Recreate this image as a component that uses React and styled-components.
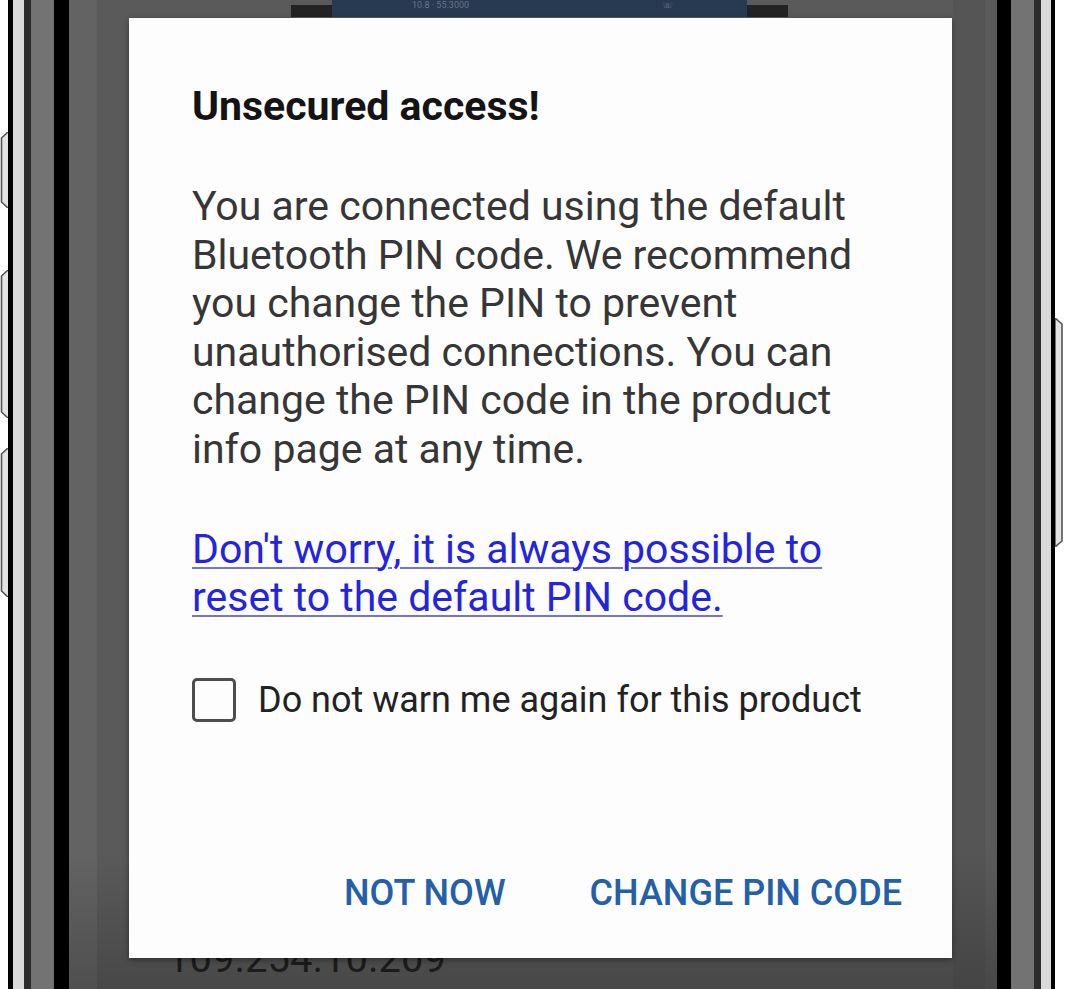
import React, { useState } from "react";
import styled, { createGlobalStyle } from "styled-components";

const GlobalStyle = createGlobalStyle`
  html, body {
    margin: 0;
    padding: 0;
    background: #ffffff;
  }
  body {
    font-family: Roboto, "Liberation Sans", Arial, sans-serif;
  }
`;

const Page = styled.div`
  position: relative;
  display: flex;
  width: 1065px;
  height: 989px;
  overflow: hidden;
  padding: 0 10px 0 8px;
  box-sizing: border-box;
  background: #ffffff;
`;

// one ring of the phone casing, only the sides are on screen
const Ring = styled.div`
  flex: 1;
  display: flex;
  height: 100%;
  box-sizing: border-box;
  padding: 0 ${(p) => p.$r}px 0 ${(p) => p.$l}px;
  background: ${(p) => p.$c};
`;

const Screen = styled.div`
  position: relative;
  flex: 1;
  display: flex;
  flex-direction: column;
  background:
    linear-gradient(to bottom, rgba(0, 0, 0, 0) 86%, rgba(0, 0, 0, 0.2) 100%),
    linear-gradient(
      to right,
      #636363 0,
      #636363 28px,
      #5a5a5a 28px,
      #5a5a5a 884px,
      #555555 884px,
      #555555 916px,
      #5a5a5a 916px
    );
`;

const TopBar = styled.div`
  display: flex;
  padding-left: 222px;
  height: 17px;
`;

const BarEnd = styled.div`
  width: 41px;
  margin-top: 5px;
  background: #232323;
`;

const BarMid = styled.div`
  width: 415px;
  display: flex;
  align-items: flex-start;
  justify-content: space-between;
  padding: 0 74px 0 80px;
  box-sizing: border-box;
  background: #283a52;
  color: rgba(255, 255, 255, 0.3);
  font-size: 9px;
  line-height: 10px;
`;

const IpText = styled.div`
  margin-top: auto;
  padding: 0 0 7px 98px;
  font-size: 40px;
  line-height: 47px;
  color: #1b1b1b;
`;

const Dialog = styled.div`
  position: absolute;
  top: 18px;
  left: 60px;
  width: 823px;
  height: 940px;
  box-sizing: border-box;
  display: flex;
  flex-direction: column;
  padding: 65px 62px 44px 63px;
  background: #fdfdfd;
  box-shadow: 0 2px 6px rgba(0, 0, 0, 0.4);
`;

const Title = styled.h2`
  margin: 0;
  font-size: 41px;
  line-height: 47px;
  font-weight: 700;
  color: #141414;
`;

const Body = styled.p`
  margin: 52px 0 0;
  width: 680px;
  font-size: 41px;
  line-height: 48.6px;
  color: #363636;
`;

const ResetLink = styled.a`
  display: block;
  margin-top: 51px;
  width: 680px;
  font-size: 41px;
  line-height: 48.6px;
  color: #2424e0;
  text-decoration: underline;
  text-decoration-color: #7474d6;
  text-decoration-thickness: 2px;
  text-underline-offset: 4px;
  cursor: pointer;
`;

const CheckRow = styled.label`
  display: flex;
  align-items: center;
  gap: 22px;
  margin-top: 56px;
  cursor: pointer;
`;

const Box = styled.span`
  width: 44px;
  height: 44px;
  box-sizing: border-box;
  border: 3.5px solid #4d4d4d;
  border-radius: 5px;
  background: ${(p) => (p.$on ? "#4d4d4d" : "transparent")};
`;

const CheckLabel = styled.span`
  font-size: 36px;
  line-height: 42px;
  color: #222222;
`;

const Actions = styled.div`
  display: flex;
  justify-content: flex-end;
  gap: 84px;
  margin: auto -12px 0 0;
`;

const ActionButton = styled.button`
  padding: 0;
  border: none;
  background: none;
  font-family: inherit;
  font-size: 36px;
  line-height: 41px;
  font-weight: 500;
  color: #2360a8;
  text-transform: uppercase;
  cursor: pointer;
`;

const SideKey = styled.svg`
  position: absolute;
  top: ${(p) => p.$top}px;
  ${(p) => (p.$right ? "right: 0;" : "left: 0;")}
`;

const Key = ({ top, height, right }) => {
  const w = right ? 10 : 8;
  const pts = right
    ? `0,0 7,6 7,${height - 6} 0,${height} 0,0`
    : `8,0 1.5,6 1.5,${height - 6} 8,${height}`;
  return (
    <SideKey $top={top} $right={right} width={w} height={height}>
      <polyline
        points={pts}
        fill="#e4e4e4"
        stroke="#555555"
        strokeWidth="1.6"
      />
    </SideKey>
  );
};

const App = () => {
  const [dontWarn, setDontWarn] = useState(false);

  return (
    <Page>
      <GlobalStyle />
      <Ring $c="#000000" $l={5} $r={4}>
        <Ring $c="#d9d9d9" $l={11} $r={10}>
          <Ring $c="#2b2b2b" $l={7} $r={7}>
            <Ring $c="#737373" $l={23} $r={23}>
              <Ring $c="#000000" $l={15} $r={14}>
                <Screen>
                  <TopBar>
                    <BarEnd />
                    <BarMid>
                      <span>10.8 · 55.3000</span>
                      <span>☏</span>
                    </BarMid>
                    <BarEnd />
                  </TopBar>
                  <IpText>109.254.10.209</IpText>

                  <Dialog>
                    <Title>Unsecured access!</Title>
                    <Body>
                      You are connected using the default Bluetooth PIN code.
                      We recommend you change the PIN to prevent unauthorised
                      connections. You can change the PIN code in the product
                      info page at any time.
                    </Body>
                    <ResetLink>
                      Don't worry, it is always possible to reset to the
                      default PIN code.
                    </ResetLink>
                    <CheckRow onClick={() => setDontWarn(!dontWarn)}>
                      <Box $on={dontWarn} />
                      <CheckLabel>Do not warn me again for this product</CheckLabel>
                    </CheckRow>
                    <Actions>
                      <ActionButton>Not now</ActionButton>
                      <ActionButton>Change PIN code</ActionButton>
                    </Actions>
                  </Dialog>
                </Screen>
              </Ring>
            </Ring>
          </Ring>
        </Ring>
      </Ring>
      <Key top={132} height={76} />
      <Key top={270} height={148} />
      <Key top={448} height={149} />
      <Key top={318} height={229} right />
    </Page>
  );
};

export default App;
